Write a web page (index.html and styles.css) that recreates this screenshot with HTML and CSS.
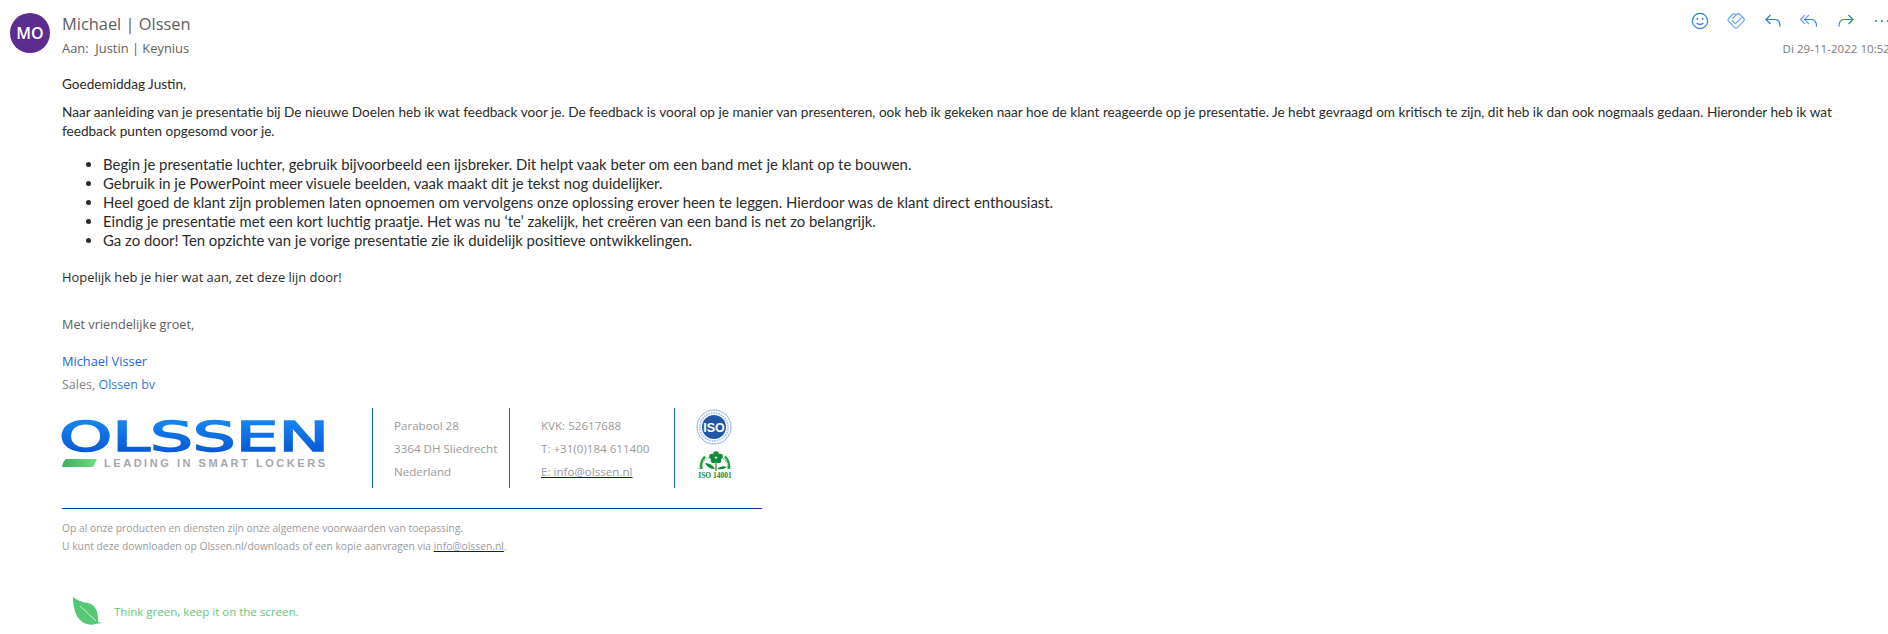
FILE: index.html
```html
<!DOCTYPE html>
<html lang="nl">

<head>
  <meta charset="UTF-8">
  <meta name="viewport" content="width=device-width, initial-scale=1.0">
  <title>Feedback presentatie</title>
  <link rel="stylesheet" href="styles.css">
</head>

<body>
  <header class="mail-head">
    <div class="avatar">MO</div>
    <div class="people">
      <div class="sender">Michael | Olssen</div>
      <div class="recipient">Aan:&nbsp; Justin | Keynius</div>
    </div>
    <div class="meta">
      <div class="actions">
        <svg class="icon" viewBox="0 0 20 20"><circle cx="10" cy="10" r="7.6" /><circle class="dot" cx="7.4" cy="8" r=".9" /><circle class="dot" cx="12.6" cy="8" r=".9" /><path d="M6.6 12q3.4 3 6.8 0" /></svg>
        <svg class="icon" viewBox="0 0 20 20"><path class="light" d="M6.500 3.500 2.600 7.400a2 2 0 0 0 0 2.800l5.900 6.200a2.200 2.200 0 0 0 3.100 0l5.800-6a2.600 2.600 0 0 0 0-3.600L14 3.600a2.500 2.500 0 0 0-3.500 0L10 4.100 9.700 3.600a2.300 2.300 0 0 0-3.200-.1Z" /><path class="light" d="M6 9.200l3.500 3.500 6.800-6.800M10 4.100 6.500 7.500" /></svg>
        <svg class="icon" viewBox="0 0 20 20"><path d="M7.500 4 3 8.500 7.500 13M3 8.500h9q5 0 5 7" /></svg>
        <svg class="icon" viewBox="0 0 20 20"><path class="light" d="M6 4 1.500 8.500 6 13M10 4 5.500 8.500 10 13" /><path d="M5.500 8.500h7q5 0 5 7" /></svg>
        <svg class="icon" viewBox="0 0 20 20"><path d="M12.500 4 17 8.500 12.500 13M17 8.500H8q-5 0-5 7" /></svg>
        <svg class="icon" viewBox="0 0 20 20"><circle class="dot" cx="4" cy="10" r="1.100" /><circle class="dot" cx="10" cy="10" r="1.100" /><circle class="dot" cx="16" cy="10" r="1.100" /></svg>
      </div>
      <div class="date">Di 29-11-2022 10:52</div>
    </div>
  </header>

  <main class="mail-body">
    <p class="greeting">Goedemiddag Justin,</p>
    <p class="intro">Naar aanleiding van je presentatie bij De nieuwe Doelen heb ik wat feedback voor je. De feedback is vooral op je manier van presenteren, ook heb ik gekeken naar hoe de klant reageerde op je presentatie. Je hebt gevraagd om kritisch te zijn, dit heb ik dan ook nogmaals gedaan. Hieronder heb ik wat feedback punten opgesomd voor je.</p>
    <ul class="points">
      <li>Begin je presentatie luchter, gebruik bijvoorbeeld een ijsbreker. Dit helpt vaak beter om een band met je klant op te bouwen.</li>
      <li>Gebruik in je PowerPoint meer visuele beelden, vaak maakt dit je tekst nog duidelijker.</li>
      <li>Heel goed de klant zijn problemen laten opnoemen om vervolgens onze oplossing erover heen te leggen. Hierdoor was de klant direct enthousiast.</li>
      <li>Eindig je presentatie met een kort luchtig praatje. Het was nu ‘te’ zakelijk, het creëren van een band is net zo belangrijk.</li>
      <li>Ga zo door! Ten opzichte van je vorige presentatie zie ik duidelijk positieve ontwikkelingen.</li>
    </ul>
    <p class="closing">Hopelijk heb je hier wat aan, zet deze lijn door!</p>

    <p class="regards">Met vriendelijke groet,</p>
    <p class="sign-name">Michael Visser</p>
    <p class="sign-role">Sales, <span class="blue">Olssen bv</span></p>

    <div class="signature">
      <div class="logo">
        <svg viewBox="0 0 274 62" width="274" height="62">
          <defs>
            <linearGradient id="logoBlue" x1="0" y1="0" x2="0" y2="1">
              <stop offset="0" stop-color="#1b8cf5" />
              <stop offset="1" stop-color="#0450cf" />
            </linearGradient>
            <linearGradient id="logoGreen" x1="0" y1="0" x2="1" y2="0">
              <stop offset="0" stop-color="#3fae5e" />
              <stop offset="1" stop-color="#72dc82" />
            </linearGradient>
          </defs>
          <text class="logo-word" x="1" y="40" textLength="270" lengthAdjust="spacingAndGlyphs" fill="url(#logoBlue)" stroke="url(#logoBlue)">OLSSEN</text>
          <path d="M8 48h31l-4 8H4q1-6 4-8Z" fill="url(#logoGreen)" />
          <text class="logo-tag" x="46" y="56" textLength="221">LEADING IN SMART LOCKERS</text>
        </svg>
      </div>
      <div class="sig-col address">
        <div>Parabool 28</div>
        <div>3364 DH Sliedrecht</div>
        <div>Nederland</div>
      </div>
      <div class="sig-col contact">
        <div>KVK: 52617688</div>
        <div>T: +31(0)184 611400</div>
        <div><a href="#">E: info@olssen.nl</a></div>
      </div>
      <div class="sig-col badges">
        <svg viewBox="0 0 36 36" width="36" height="36">
          <circle cx="18" cy="18" r="17" fill="#fff" stroke="#8fb0dc" />
          <circle cx="18" cy="18" r="14" fill="none" stroke="#a9c2e6" stroke-width="2" stroke-dasharray="1.500 1" />
          <circle cx="18" cy="18" r="12" fill="#2257a8" />
          <text class="iso" x="18" y="22.500">ISO</text>
        </svg>
        <svg viewBox="0 0 38 34" width="38" height="36">
          <path d="M3 22A16.500 16.500 0 0 1 35 22" fill="none" stroke="#8fd0a0" stroke-width="2" stroke-dasharray="1.500 1" />
          <path d="M5.500 22A13.500 13.500 0 0 1 9 9.500M32.500 22A13.500 13.500 0 0 0 29 9.500" fill="none" stroke="#1fa045" stroke-width="2.400" />
          <circle cx="20" cy="7" r="2.800" fill="#138a3a" />
          <circle cx="16" cy="9.500" r="2.800" fill="#138a3a" />
          <circle cx="24" cy="9.500" r="2.800" fill="#138a3a" />
          <circle cx="17.500" cy="13.500" r="2.800" fill="#138a3a" />
          <circle cx="22.500" cy="13.500" r="2.800" fill="#138a3a" />
          <path d="M20 13v11" fill="none" stroke="#138a3a" stroke-width="1.200" />
          <path d="M9 16q7 0 10 6-7 0-10-6ZM31 20q-6-2-10 2 6 1 10-2Z" fill="#138a3a" />
          <text class="iso-green" x="19" y="31">ISO 14001</text>
        </svg>
      </div>
    </div>

    <div class="rule"></div>

    <p class="terms">Op al onze producten en diensten zijn onze algemene voorwaarden van toepassing.<br>U kunt deze downloaden op Olssen.nl/downloads of een kopie aanvragen via <a href="#">info@olssen.nl</a>.</p>

    <div class="green-note">
      <svg viewBox="0 0 32 30" width="32" height="30">
        <path d="M1 1Q7 6 16 7 27 10 26 26L31 27 26 27.500Q15 31 8 24 1 17 1 1Z" fill="#56c773" />
        <path d="M8 10 24 25" stroke="#c9efd3" stroke-width="1" fill="none" />
      </svg>
      <span>Think green, keep it on the screen.</span>
    </div>
  </main>
</body>

</html>
```

FILE: styles.css
```css
body {
  margin: 0;
  background-color: #fff;
  font-family: "Open Sans", sans-serif;
  color: #222;
  overflow: hidden;
}

p {
  margin: 0;
}

.mail-head {
  display: flex;
  padding: 13px 0 0 10px;
  height: 62px;
  box-sizing: border-box;
}

.avatar {
  width: 40px;
  height: 40px;
  border-radius: 50%;
  background-color: #5c2d91;
  color: #fff;
  font-size: 16px;
  font-weight: 600;
  line-height: 40px;
  text-align: center;
}

.people {
  margin-left: 12px;
  flex: 1;
}

.sender {
  font-size: 16.400px;
  line-height: 24px;
  color: #605e5c;
  margin-top: -1px;
}

.recipient {
  font-size: 12.900px;
  line-height: 22px;
  margin-top: 1px;
  color: #605e5c;
}

.meta {
  display: flex;
  flex-direction: column;
  align-items: flex-end;
  margin-top: -7px;
}

.actions {
  display: flex;
  gap: 16.500px;
  margin-right: -4px;
  height: 30px;
  align-items: center;
}

.icon {
  width: 20px;
  height: 20px;
  fill: none;
  stroke: #2b7cd3;
  stroke-width: 1.200;
}

.icon .light {
  stroke: #6aa5ec;
}

.icon .dot {
  fill: #2b7cd3;
  stroke: none;
}

.date {
  margin-top: 3px;
  font-size: 11.600px;
  line-height: 20px;
  color: #7a7a7a;
  white-space: nowrap;
  margin-right: -2px;
}

.mail-body {
  padding-left: 62px;
  padding-right: 30px;
  font-family: Lato, sans-serif;
  font-size: 13.600px;
  line-height: 19px;
  color: #2b2b2b;
}

.greeting {
  margin-top: 13px;
}

.intro {
  margin-top: 9px;
}

.points {
  margin: 14px 0 0;
  padding-left: 41px;
  font-size: 14.900px;
}

.closing {
  margin-top: 18px;
  font-family: "Open Sans", sans-serif;
  font-size: 12.900px;
}

.regards {
  margin-top: 28px;
  font-family: "Open Sans", sans-serif;
  font-size: 12.700px;
  color: #605e5c;
}

.sign-name {
  margin-top: 18px;
  font-family: "Open Sans", sans-serif;
  font-size: 12.800px;
  color: #1a66d6;
}

.sign-role {
  margin-top: 4px;
  font-family: "Open Sans", sans-serif;
  font-size: 12.500px;
  color: #808080;
}

.blue {
  color: #2f7bdc;
}

.signature {
  display: flex;
  margin-top: 14px;
  height: 80px;
  font-family: "Open Sans", sans-serif;
  font-size: 11.600px;
  line-height: 23px;
  color: #9a9a9a;
}

.logo {
  width: 310px;
  padding-top: 3px;
  box-sizing: border-box;
}

.logo svg {
  margin-left: -4px;
}

.logo-word {
  font-family: "DejaVu Sans", sans-serif;
  font-size: 40px;
  stroke-width: 1.500;
}

.logo-tag {
  font-family: "Liberation Sans", sans-serif;
  font-size: 11px;
  font-weight: 700;
  fill: #a4a8ab;
}

.sig-col {
  border-left: 1px solid #0f62d6;
  padding: 6px 0 0 21px;
  box-sizing: border-box;
}

.address {
  width: 137px;
}

.contact {
  width: 165px;
  padding-left: 31px;
}

.contact a,
.terms a {
  color: #9a9a9a;
  text-decoration-color: #0000e0;
}

.badges {
  padding: 1px 0 0 21px;
  display: flex;
  flex-direction: column;
  gap: 1px;
  align-items: flex-start;
}

.iso {
  font-family: "Liberation Sans", sans-serif;
  font-size: 12.500px;
  font-weight: 700;
  fill: #fff;
  text-anchor: middle;
}

.iso-green {
  font-family: "Liberation Serif", serif;
  font-size: 7.500px;
  font-weight: 700;
  fill: #138a3a;
  text-anchor: middle;
}

.rule {
  width: 700px;
  margin-top: 20px;
  border-top: 1px solid #0b3db0;
}

.terms {
  margin-top: 10px;
  font-family: "Open Sans", sans-serif;
  font-size: 10.300px;
  line-height: 18px;
  color: #9a9a9a;
}

.green-note {
  display: flex;
  align-items: center;
  margin: 41px 0 0 10px;
  gap: 10px;
  font-family: "Open Sans", sans-serif;
  font-size: 11.500px;
  color: #5ccb78;
}
```
